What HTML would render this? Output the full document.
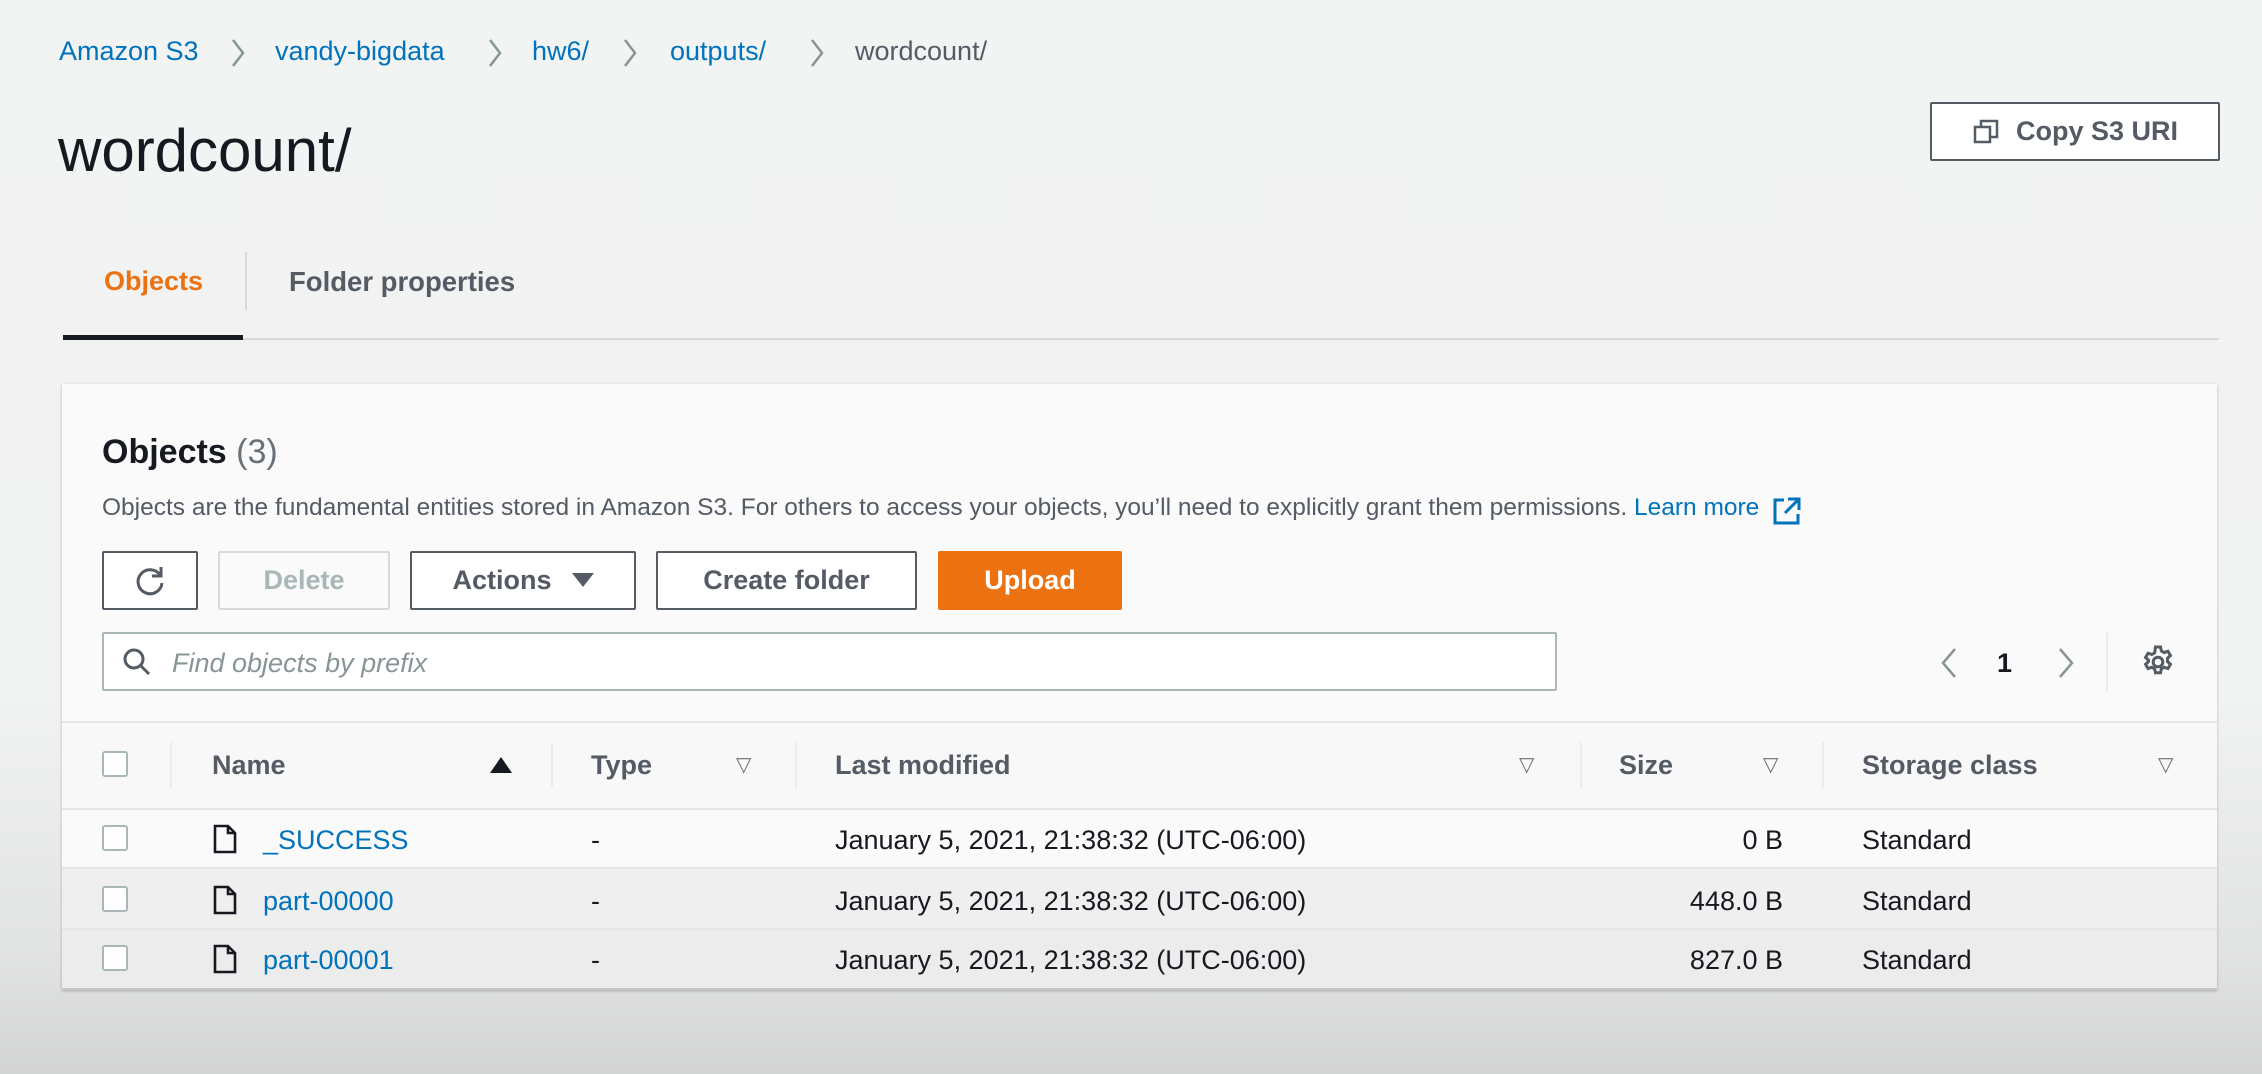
<!DOCTYPE html>
<html><head><meta charset="utf-8"><style>
*{margin:0;padding:0;box-sizing:border-box}
body{width:2262px;height:1074px;overflow:hidden;font-family:"Liberation Sans",sans-serif;background:linear-gradient(#f2f3f3 0,#f1f2f2 700px,#e2e3e3 950px,#d3d4d4 1074px);position:relative;color:#16191f}
.a{position:absolute;white-space:nowrap}
.bc{top:36px;font-size:27px;color:#0073bb}
.btn{position:absolute;border:2px solid #545b64;background:#fff;border-radius:2px;font-weight:bold;font-size:27px;color:#545b64;display:flex;align-items:center;justify-content:center}
.th{top:750px;font-size:27px;font-weight:bold;color:#545b64}
.tri{font-size:20px;color:#687078;top:752px}
.vd{position:absolute;top:742px;width:2px;height:46px;background:#eaeded}
.cell{font-size:27px;color:#16191f}
.cb{position:absolute;left:102px;width:26px;height:26px;border:2px solid #aab7b8;border-radius:3px;background:#fff}
.hl{position:absolute;left:62px;width:2155px;height:2px;background:#e4e6e6}
</style></head><body>
<div class="a bc" style="left:59px">Amazon S3</div>
<div class="a bc" style="left:275px">vandy-bigdata</div>
<div class="a bc" style="left:532px">hw6/</div>
<div class="a bc" style="left:670px">outputs/</div>
<div class="a bc" style="left:855px;color:#545b64">wordcount/</div>
<svg class="a" style="left:0;top:36px" width="900" height="34"><g fill="none" stroke="#879596" stroke-width="2.5"><path d="M233 4l10 13-10 13"/><path d="M490 4l10 13-10 13"/><path d="M625 4l10 13-10 13"/><path d="M812 4l10 13-10 13"/></g></svg>
<div class="a" style="left:58px;top:116px;font-size:60px;color:#16191f">wordcount/</div>
<div class="btn" style="left:1930px;top:102px;width:290px;height:59px">
<svg width="28" height="28" viewBox="0 0 28 28" style="margin-right:16px"><g fill="none" stroke="#545b64" stroke-width="2.5"><rect x="3" y="9" width="15" height="15"/><path d="M9 9V3h16v16h-7"/></g></svg>Copy S3 URI</div>
<div class="a" style="left:104px;top:266px;font-size:27px;font-weight:bold;color:#ec7211">Objects</div>
<div class="a" style="left:245px;top:252px;width:2px;height:58px;background:#d5dbdb"></div>
<div class="a" style="left:289px;top:266px;font-size:27.5px;font-weight:bold;color:#545b64">Folder properties</div>
<div class="a" style="left:63px;top:338px;width:2156px;height:2px;background:#d5dbdb"></div>
<div class="a" style="left:63px;top:335px;width:180px;height:5px;background:#16191f"></div>
<div class="a" style="left:62px;top:384px;width:2155px;height:606px;background:#fafafa;box-shadow:0 1px 3px rgba(0,0,0,.25)"></div>
<div class="a" style="left:102px;top:433px;font-size:34px;font-weight:bold">Objects <span style="font-weight:normal;color:#687078">(3)</span></div>
<div class="a" style="left:102px;top:494px;font-size:24.5px;color:#545b64">Objects are the fundamental entities stored in Amazon S3. For others to access your objects, you’ll need to explicitly grant them permissions. <span style="color:#0073bb">Learn more</span></div>
<svg class="a" style="left:1772px;top:496px" width="30" height="30" viewBox="0 0 30 30"><g fill="none" stroke="#0073bb" stroke-width="3"><path d="M12 4H3v23h23v-9"/><path d="M16 3h11v11M27 3L13 17"/></g></svg>
<div class="btn" style="left:102px;top:551px;width:96px;height:59px"><svg width="34" height="34" viewBox="0 0 34 34"><g fill="none" stroke="#545b64" stroke-width="3"><path d="M27 11A12 12 0 1 0 29 19"/><path d="M28 3v9h-9"/></g></svg></div>
<div class="btn" style="left:218px;top:551px;width:172px;height:59px;border-color:#d5dbdb;color:#aab7b8;background:#fafafa">Delete</div>
<div class="btn" style="left:410px;top:551px;width:226px;height:59px">Actions<svg width="22" height="16" style="margin-left:20px"><path d="M0 0h22L11 14z" fill="#545b64"/></svg></div>
<div class="btn" style="left:656px;top:551px;width:261px;height:59px">Create folder</div>
<div class="btn" style="left:938px;top:551px;width:184px;height:59px;background:#ec7211;border-color:#ec7211;color:#fff">Upload</div>
<div class="a" style="left:102px;top:632px;width:1455px;height:59px;background:#fff;border:2px solid #aab7b8;border-radius:2px"></div>
<svg class="a" style="left:122px;top:647px" width="30" height="30" viewBox="0 0 30 30"><g fill="none" stroke="#545b64" stroke-width="3"><circle cx="12" cy="12" r="9"/><path d="M19 19l8 8"/></g></svg>
<div class="a" style="left:172px;top:648px;font-size:27px;font-style:italic;color:#879596">Find objects by prefix</div>
<svg class="a" style="left:1935px;top:645px" width="150" height="36"><g fill="none" stroke="#879596" stroke-width="2.5"><path d="M20 4L8 18l12 14"/><path d="M125 4l12 14-12 14"/></g></svg>
<div class="a" style="left:1997px;top:648px;font-size:27px;font-weight:bold">1</div>
<div class="a" style="left:2106px;top:633px;width:2px;height:58px;background:#eaeded"></div>
<svg class="a" style="left:2140px;top:644px" width="36" height="36" viewBox="0 0 24 24"><g fill="none" stroke="#545b64" stroke-width="2"><circle cx="12" cy="12" r="3.2"/><path d="M10.3 2h3.4l.5 2.6 1.9 1.1 2.5-.9 1.7 2.9-2 1.8v2.2l2 1.8-1.7 2.9-2.5-.9-1.9 1.1-.5 2.6h-3.4l-.5-2.6-1.9-1.1-2.5.9-1.7-2.9 2-1.8V10.8l-2-1.8 1.7-2.9 2.5.9 1.9-1.1z"/></g></svg>
<div class="hl" style="top:721px"></div>
<div class="a" style="left:62px;top:723px;width:2155px;height:85px;background:#f8f8f8"></div>
<div class="hl" style="top:808px"></div>
<div class="cb" style="top:751px"></div>
<div class="vd" style="left:170px"></div><div class="vd" style="left:551px"></div><div class="vd" style="left:795px"></div><div class="vd" style="left:1580px"></div><div class="vd" style="left:1822px"></div>
<div class="a th" style="left:212px">Name</div><svg class="a" style="left:490px;top:756px" width="22" height="18"><path d="M0 17h22L11 1z" fill="#16191f"/></svg>
<div class="a th" style="left:591px">Type</div><div class="a tri" style="left:736px">▽</div>
<div class="a th" style="left:835px">Last modified</div><div class="a tri" style="left:1519px">▽</div>
<div class="a th" style="left:1619px">Size</div><div class="a tri" style="left:1763px">▽</div>
<div class="a th" style="left:1862px">Storage class</div><div class="a tri" style="left:2158px">▽</div>
<div class="a" style="left:62px;top:868px;width:2155px;height:61px;background:#efefef"></div>
<div class="a" style="left:62px;top:930px;width:2155px;height:59px;background:#ececec"></div>
<div class="hl" style="top:867px"></div><div class="hl" style="top:928px"></div>
<div class="a" style="left:62px;top:988px;width:2155px;height:2px;background:#c5c8c8"></div>
<div class="cb" style="top:825px"></div><div class="cb" style="top:886px"></div><div class="cb" style="top:945px"></div>
<svg class="a" style="left:213px;top:824px" width="24" height="30" viewBox="0 0 24 30"><path d="M2 2h13l7 7v19H2z M15 2v7h7" fill="none" stroke="#16191f" stroke-width="2.6"/></svg>
<svg class="a" style="left:213px;top:885px" width="24" height="30" viewBox="0 0 24 30"><path d="M2 2h13l7 7v19H2z M15 2v7h7" fill="none" stroke="#16191f" stroke-width="2.6"/></svg>
<svg class="a" style="left:213px;top:944px" width="24" height="30" viewBox="0 0 24 30"><path d="M2 2h13l7 7v19H2z M15 2v7h7" fill="none" stroke="#16191f" stroke-width="2.6"/></svg>
<div class="a cell" style="left:263px;top:825px;color:#0073bb">_SUCCESS</div>
<div class="a cell" style="left:263px;top:886px;color:#0073bb">part-00000</div>
<div class="a cell" style="left:263px;top:945px;color:#0073bb">part-00001</div>
<div class="a cell" style="left:591px;top:825px">-</div><div class="a cell" style="left:591px;top:886px">-</div><div class="a cell" style="left:591px;top:945px">-</div>
<div class="a cell" style="left:835px;top:825px">January 5, 2021, 21:38:32 (UTC-06:00)</div>
<div class="a cell" style="left:835px;top:886px">January 5, 2021, 21:38:32 (UTC-06:00)</div>
<div class="a cell" style="left:835px;top:945px">January 5, 2021, 21:38:32 (UTC-06:00)</div>
<div class="a cell" style="right:479px;top:825px">0 B</div>
<div class="a cell" style="right:479px;top:886px">448.0 B</div>
<div class="a cell" style="right:479px;top:945px">827.0 B</div>
<div class="a cell" style="left:1862px;top:825px">Standard</div>
<div class="a cell" style="left:1862px;top:886px">Standard</div>
<div class="a cell" style="left:1862px;top:945px">Standard</div>
</body></html>
